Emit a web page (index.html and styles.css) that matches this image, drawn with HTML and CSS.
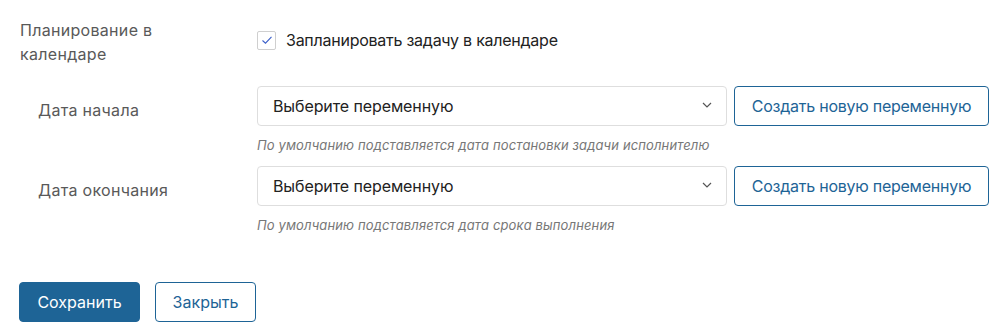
FILE: index.html
```html
<!DOCTYPE html>
<html lang="ru">
<head>
<meta charset="utf-8">
<link rel="stylesheet" href="styles.css">
</head>
<body>
<div class="form">
  <div class="row row-top">
    <div class="label label-main">Планирование в календаре</div>
    <div class="field check-field">
      <span class="checkbox">
        <svg width="12" height="10" viewBox="0 0 12 10"><path d="M1.5 5.5 L4.5 8.2 L10.5 1.8" fill="none" stroke="#3b5fc9" stroke-width="1.1"/></svg>
      </span>
      <span class="check-text">Запланировать задачу в календаре</span>
    </div>
  </div>
  <div class="row">
    <div class="label label-sub">Дата начала</div>
    <div class="field">
      <div class="controls">
        <div class="select">
          <span>Выберите переменную</span>
          <svg class="chev" width="10" height="6" viewBox="0 0 10 6"><path d="M1 1 L5 5 L9 1" fill="none" stroke="#555" stroke-width="1.2"/></svg>
        </div>
        <button class="btn-outline">Создать новую переменную</button>
      </div>
      <div class="hint">По умолчанию подставляется дата постановки задачи исполнителю</div>
    </div>
  </div>
  <div class="row">
    <div class="label label-sub">Дата окончания</div>
    <div class="field">
      <div class="controls">
        <div class="select">
          <span>Выберите переменную</span>
          <svg class="chev" width="10" height="6" viewBox="0 0 10 6"><path d="M1 1 L5 5 L9 1" fill="none" stroke="#555" stroke-width="1.2"/></svg>
        </div>
        <button class="btn-outline">Создать новую переменную</button>
      </div>
      <div class="hint">По умолчанию подставляется дата срока выполнения</div>
    </div>
  </div>
  <div class="actions">
    <button class="btn-primary">Сохранить</button>
    <button class="btn-secondary">Закрыть</button>
  </div>
</div>
</body>
</html>
```
FILE: styles.css
```css
html, body {
  margin: 0;
  padding: 0;
  background: #fff;
}
body {
  font-family: Inter, "Noto Sans", sans-serif;
  font-size: 16px;
  color: #222;
}
.form {
  padding: 18px 18px 0 20px;
}
.row {
  display: grid;
  grid-template-columns: 237px 1fr;
  margin-bottom: 12px;
}
.row-top {
  margin-bottom: 20px;
}
.label {
  color: #595959;
  line-height: 24px;
  letter-spacing: 0.3px;
}
.label-main {
  width: 190px;
}
.label-sub {
  padding-left: 18px;
  padding-top: 12px;
}
.check-field {
  display: flex;
  align-items: center;
  gap: 10px;
  padding-bottom: 4px;
}
.checkbox {
  width: 17px;
  height: 17px;
  border: 1px solid #cfcfcf;
  border-radius: 2px;
  display: flex;
  align-items: center;
  justify-content: center;
  box-sizing: content-box;
}
.check-text {
  line-height: 24px;
  color: #222;
  letter-spacing: -0.25px;
}
.controls {
  display: flex;
  gap: 7px;
}
.select {
  width: 470px;
  height: 40px;
  box-sizing: border-box;
  border: 1px solid #dedede;
  border-radius: 4px;
  display: flex;
  align-items: center;
  justify-content: space-between;
  padding: 0 14px 0 15px;
  color: #222;
  letter-spacing: -0.1px;
}
.chev {
  margin-top: -2px;
}
button {
  font-family: inherit;
  font-size: 16px;
  height: 40px;
  box-sizing: border-box;
  border-radius: 4px;
  cursor: pointer;
}
.btn-outline {
  width: 255px;
  background: #fff;
  border: 1px solid #1e6496;
  color: #1e6496;
  padding: 0;
  letter-spacing: -0.25px;
}
.hint {
  margin-top: 10px;
  font-size: 13px;
  line-height: 18px;
  font-style: italic;
  color: #777;
  letter-spacing: 0.13px;
}
.actions {
  display: flex;
  gap: 15px;
  margin-top: 48px;
  margin-left: -1px;
}
.btn-primary {
  width: 121px;
  background: #1e6496;
  border: 1px solid #1e6496;
  color: #fff;
}
.btn-secondary {
  width: 101px;
  background: #fff;
  border: 1px solid #1e6496;
  color: #1e6496;
}
```
